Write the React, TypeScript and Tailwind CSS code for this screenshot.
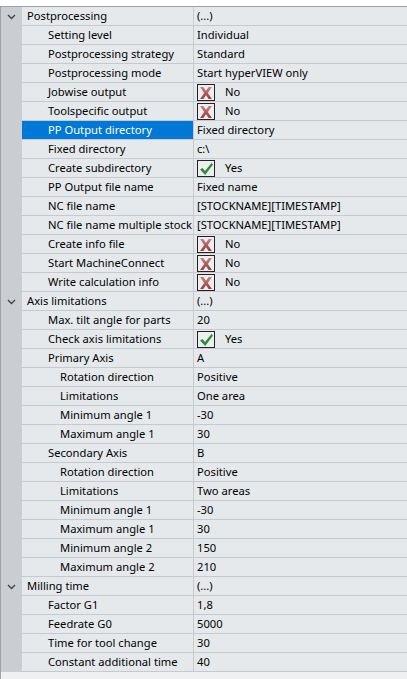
import React from 'react';

type Row = {
  level: number;
  label: string;
  value: string;
  icon?: 'no' | 'yes';
  selected?: boolean;
};

const rows: Row[] = [
  { level: 0, label: 'Postprocessing', value: '(...)' },
  { level: 1, label: 'Setting level', value: 'Individual' },
  { level: 1, label: 'Postprocessing strategy', value: 'Standard' },
  { level: 1, label: 'Postprocessing mode', value: 'Start hyperVIEW only' },
  { level: 1, label: 'Jobwise output', value: 'No', icon: 'no' },
  { level: 1, label: 'Toolspecific output', value: 'No', icon: 'no' },
  { level: 1, label: 'PP Output directory', value: 'Fixed directory', selected: true },
  { level: 1, label: 'Fixed directory', value: 'c:\\' },
  { level: 1, label: 'Create subdirectory', value: 'Yes', icon: 'yes' },
  { level: 1, label: 'PP Output file name', value: 'Fixed name' },
  { level: 1, label: 'NC file name', value: '[STOCKNAME][TIMESTAMP]' },
  { level: 1, label: 'NC file name multiple stock', value: '[STOCKNAME][TIMESTAMP]' },
  { level: 1, label: 'Create info file', value: 'No', icon: 'no' },
  { level: 1, label: 'Start MachineConnect', value: 'No', icon: 'no' },
  { level: 1, label: 'Write calculation info', value: 'No', icon: 'no' },
  { level: 0, label: 'Axis limitations', value: '(...)' },
  { level: 1, label: 'Max. tilt angle for parts', value: '20' },
  { level: 1, label: 'Check axis limitations', value: 'Yes', icon: 'yes' },
  { level: 1, label: 'Primary Axis', value: 'A' },
  { level: 2, label: 'Rotation direction', value: 'Positive' },
  { level: 2, label: 'Limitations', value: 'One area' },
  { level: 2, label: 'Minimum angle 1', value: '-30' },
  { level: 2, label: 'Maximum angle 1', value: '30' },
  { level: 1, label: 'Secondary Axis', value: 'B' },
  { level: 2, label: 'Rotation direction', value: 'Positive' },
  { level: 2, label: 'Limitations', value: 'Two areas' },
  { level: 2, label: 'Minimum angle 1', value: '-30' },
  { level: 2, label: 'Maximum angle 1', value: '30' },
  { level: 2, label: 'Minimum angle 2', value: '150' },
  { level: 2, label: 'Maximum angle 2', value: '210' },
  { level: 0, label: 'Milling time', value: '(...)' },
  { level: 1, label: 'Factor G1', value: '1,8' },
  { level: 1, label: 'Feedrate G0', value: '5000' },
  { level: 1, label: 'Time for tool change', value: '30' },
  { level: 1, label: 'Constant additional time', value: '40' },
];

function BoolIcon({ kind }: { kind: 'yes' | 'no' }) {
  return (
    <span className="flex h-[17px] w-[18px] items-center justify-center border border-[#222] bg-[#eceef0]">
      {kind === 'no' ? (
        <svg width="14" height="14" viewBox="0 0 13 13">
          <defs>
            <linearGradient id="xg" x1="0" y1="0" x2="0" y2="1">
              <stop offset="0" stopColor="#c98080" />
              <stop offset="1" stopColor="#9a3c3c" />
            </linearGradient>
          </defs>
          <path d="M1 1 L4 1 L6.5 4.5 L9 1 L12 1 L8.2 6.5 L12 12 L9 12 L6.5 8.5 L4 12 L1 12 L4.8 6.5 Z" fill="url(#xg)" />
        </svg>
      ) : (
        <svg width="15" height="14" viewBox="0 0 15 14">
          <path d="M1 7.5 L3.5 6 L6 9 L12.5 1 L14 2.5 L6.2 13 Z" fill="#2f8a3a" />
        </svg>
      )}
    </span>
  );
}

function Chevron() {
  return (
    <svg width="9" height="6" viewBox="0 0 9 6">
      <path d="M1 1 L4.5 4.5 L8 1" fill="none" stroke="#444" strokeWidth="1.4" />
    </svg>
  );
}

export default function App() {
  const indent = ['pl-[5px]', 'pl-[26px]', 'pl-[38px]'];
  return (
    <div
      className="h-[679px] w-[407px] overflow-hidden bg-white text-[11.2px] text-black"
      style={{ fontFamily: '"Noto Sans", "Segoe UI", sans-serif' }}
    >
      <div className="h-[6px] bg-white" />
      <div className="border-t border-[#a0a0a0] border-l border-l-[#a0a0a0]">
        {rows.map((r, i) => (
          <div key={i} className="flex h-[19px]">
            <div className="flex w-[21px] items-center justify-center bg-[#cacdd1]">
              {r.level === 0 && <Chevron />}
            </div>
            <div
              className={`flex w-[172px] items-center border-b border-r border-[#c6c9cd] pt-[1px] ${indent[r.level]} whitespace-nowrap overflow-hidden ${
                r.selected ? 'bg-[#0078d7] text-white' : 'bg-[#e6e9ec]'
              }`}
            >
              {r.label}
            </div>
            <div className="flex flex-1 items-center gap-[10px] whitespace-nowrap border-b border-[#c6c9cd] bg-[#e6e9ec] pl-[3px] pt-[1px]">
              {r.icon && <BoolIcon kind={r.icon} />}
              <span>{r.value}</span>
            </div>
          </div>
        ))}
        <div className="h-[10px] bg-[#eef0f2]" />
      </div>
    </div>
  );
}
